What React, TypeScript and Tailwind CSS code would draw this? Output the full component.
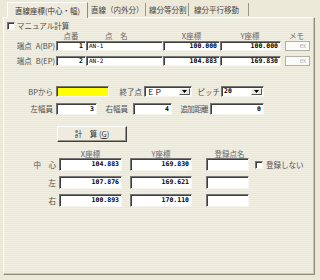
import React from 'react';

const sunken =
  'bg-white border border-t-[#777] border-l-[#777] border-b-[#f6f5ef] border-r-[#f6f5ef] shadow-[inset_1px_1px_0_#3f3f3f]';
const num = "font-['DejaVu_Sans_Mono',monospace] font-bold text-[6.5px] leading-none text-black";
const jp = "font-['Noto_Sans_CJK_JP','Noto_Sans',sans-serif]";

const Box: React.FC<{ className: string; right?: boolean; children?: React.ReactNode }> = ({
  className,
  right = true,
  children,
}) => (
  <div
    className={`flex items-center ${sunken} ${right ? 'justify-end pr-[2px]' : 'pl-[2px]'} ${className}`}
  >
    {children}
  </div>
);

const Check: React.FC = () => <span className={`block w-[8px] h-[8px] shrink-0 ${sunken}`} />;

const Select: React.FC<{ className: string; children: React.ReactNode }> = ({ className, children }) => (
  <div className={`flex items-stretch ${sunken} ${className}`}>
    <div className="flex-1 flex items-center pl-[2px]">{children}</div>
    <div className="w-[11px] my-[1px] mr-[1px] bg-[#ece9d8] border border-t-white border-l-white border-b-[#555] border-r-[#555] flex items-center justify-center">
      <svg width="5" height="3" viewBox="0 0 5 3">
        <path d="M0 0h5L2.5 3z" fill="#000" />
      </svg>
    </div>
  </div>
);

const Label: React.FC<{ className: string; children: React.ReactNode }> = ({ className, children }) => (
  <span className={`text-[7.5px] leading-none text-[#505050] whitespace-nowrap ${className}`}>{children}</span>
);

const results = [
  { label: '中　心', x: '104.883', y: '169.830', first: true },
  { label: '左', x: '107.876', y: '169.621' },
  { label: '右', x: '100.893', y: '170.110' },
];

export default function App() {
  return (
    <div className={`w-[320px] h-[280px] bg-[#ece9d8] pt-[2px] pl-[3px] overflow-hidden ${jp}`}>
      {/* tabs */}
      <div className="flex items-end h-[15px] pl-[4px]">
        <div className="relative z-10 w-[81px] h-[16px] -mb-[1px] bg-[#efecdf] border-t border-l border-r border-t-white border-l-white border-r-[#8f8c7e] flex items-center justify-center">
          <span className="text-[7.5px] leading-none text-[#333]">直線座標(中心・幅)</span>
        </div>
        <div className="w-[58px] h-[13px] mb-[1px] border-r border-r-[#9a9788] flex items-center pl-[3px]">
          <span className="text-[7.5px] leading-none text-[#444]">直線（内外分）</span>
        </div>
        <div className="w-[43px] h-[13px] mb-[1px] border-r border-r-[#9a9788] flex items-center pl-[3px]">
          <span className="text-[7.5px] leading-none text-[#444]">線分等分割</span>
        </div>
        <div className="w-[60px] h-[13px] mb-[1px] border-r border-r-[#9a9788] flex items-center pl-[5px]">
          <span className="text-[7.5px] leading-none text-[#444]">線分平行移動</span>
        </div>
      </div>

      {/* panel */}
      <div className="w-[312px] h-[258px] border border-t-white border-l-white border-b-[#8f8c7e] border-r-[#8f8c7e] shadow-[inset_-1px_-1px_0_#c9c6b6] bg-[repeating-linear-gradient(to_bottom,#f1eee2_0px,#f1eee2_1px,#ebe8da_1px,#ebe8da_2px)] flex flex-col">
        <div className="flex items-center gap-[2px] ml-[3px] mt-[3px] h-[9px]">
          <Check />
          <Label className="">マニュアル計算</Label>
        </div>

        {/* points header */}
        <div className="flex items-center h-[9px] mt-[1px] ml-[52px]">
          <Label className="w-[30px] text-center !text-[#666]">点番</Label>
          <Label className="w-[77px] pl-[19px] !text-[#666]">点　名</Label>
          <Label className="w-[57px] text-center !text-[#666]">X座標</Label>
          <Label className="w-[60px] text-center !text-[#666]">Y座標</Label>
          <Label className="w-[29px] pl-[4px] text-center !text-[#666]">メモ</Label>
        </div>

        {[
          { l: '端点', s: 'A(BP)', n: '1', name: 'AN-1', x: '100.000', y: '100.000' },
          { l: '端点', s: 'B(EP)', n: '2', name: 'AN-2', x: '104.883', y: '169.830' },
        ].map((r, i) => (
          <div key={i} className={`flex items-stretch h-[10px] ${i === 0 ? 'mt-[1px]' : 'mt-[5px]'}`}>
            <div className="w-[52px] flex items-center justify-end pr-[1px]">
              <Label className="">
                {r.l}
                <span className="ml-[4px]">{r.s}</span>
              </Label>
            </div>
            <Box className="w-[30px]">
              <span className={num}>{r.n}</span>
            </Box>
            <Box className="w-[77px]" right={false}>
              <span className="font-['DejaVu_Sans_Mono',monospace] text-[6px] leading-none text-black">{r.name}</span>
            </Box>
            <Box className="w-[57px]">
              <span className={num}>{r.x}</span>
            </Box>
            <Box className="w-[61px]">
              <span className={num}>{r.y}</span>
            </Box>
            <div className="w-[25px] ml-[4px] bg-[#fbfbf8] border border-[#b3b1a6] flex items-center justify-end pr-[3px]">
              <span className="text-[6px] leading-none text-[#aaa]">ex</span>
            </div>
          </div>
        ))}

        {/* BP row */}
        <div className="flex items-stretch h-[11px] mt-[20px]">
          <div className="w-[49px] flex items-center justify-end">
            <Label className="">BPから</Label>
          </div>
          <div className={`w-[53px] ml-[3px] ${sunken} !bg-[#ffff00]`} />
          <div className="w-[35px] flex items-center justify-end pr-[2px]">
            <Label className="">終了点</Label>
          </div>
          <Select className="w-[48px]">
            <span className="text-[7.5px] leading-none text-black">ＥＰ</span>
          </Select>
          <div className="w-[29px] flex items-center justify-end pr-[1px]">
            <Label className="">ピッチ</Label>
          </div>
          <Select className="w-[43px]">
            <span className={num}>20</span>
          </Select>
        </div>

        {/* widths row */}
        <div className="flex items-stretch h-[12px] mt-[6px]">
          <div className="w-[49px] flex items-center justify-end">
            <Label className="">左幅員</Label>
          </div>
          <Box className="w-[41px] ml-[3px]">
            <span className={num}>3</span>
          </Box>
          <div className="w-[36px] flex items-center justify-end pr-[5px]">
            <Label className="">右幅員</Label>
          </div>
          <Box className="w-[39px]">
            <span className={num}>4</span>
          </Box>
          <div className="w-[38px] flex items-center justify-end pr-[2px]">
            <Label className="tracking-[-0.6px]">追加距離</Label>
          </div>
          <Box className="w-[54px]">
            <span className={num}>0</span>
          </Box>
        </div>

        {/* calc button */}
        <div className="mt-[11px] ml-[53px]">
          <div className="w-[70px] h-[16px] bg-[#efecdf] border border-t-white border-l-white border-b-[#3f3f3f] border-r-[#3f3f3f] shadow-[inset_-1px_-1px_0_#9a978a] flex items-center justify-center">
            <span className="text-[7.5px] leading-none text-[#333]">
              計　算 (<span className="underline">G</span>)
            </span>
          </div>
        </div>

        {/* results header */}
        <div className="flex items-center h-[8px] mt-[8px] ml-[55px]">
          <Label className="w-[63px] text-center !text-[#666]">X座標</Label>
          <Label className="w-[62px] ml-[8px] text-center !text-[#666]">Y座標</Label>
          <Label className="w-[43px] ml-[14px] text-center pl-[4px] !text-[#666]">登録点名</Label>
        </div>

        {results.map((r, i) => (
          <div key={i} className={`flex items-stretch h-[13px] ${i === 0 ? 'mt-0' : 'mt-[5px]'}`}>
            <div className="w-[53px] flex items-center justify-end pr-[1px]">
              <Label className="">{r.label}</Label>
            </div>
            <Box className="w-[63px] ml-[2px]">
              <span className={num}>{r.x}</span>
            </Box>
            <Box className="w-[62px] ml-[8px]">
              <span className={num}>{r.y}</span>
            </Box>
            <Box className="w-[43px] ml-[14px]" />
            {r.first && (
              <div className="flex items-center gap-[3px] ml-[6px]">
                <Check />
                <Label className="">登録しない</Label>
              </div>
            )}
          </div>
        ))}
      </div>
    </div>
  );
}
